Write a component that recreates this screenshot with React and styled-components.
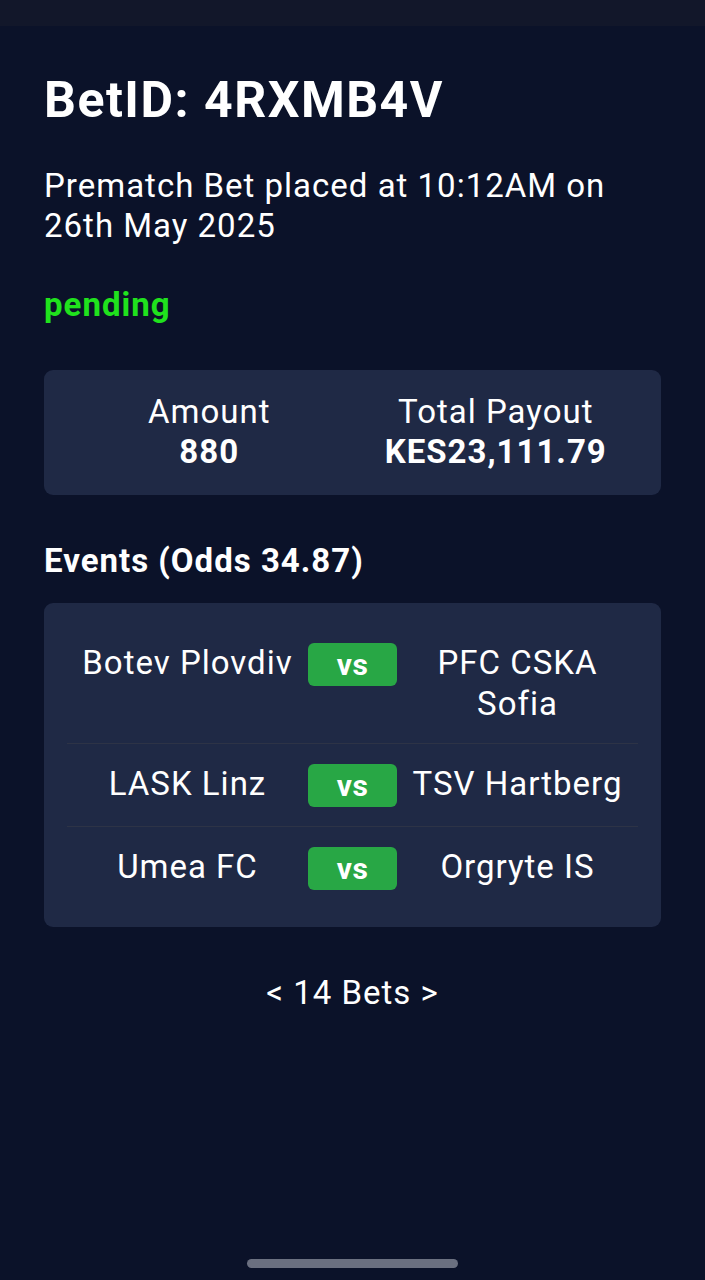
import React from "react";
import styled, { createGlobalStyle } from "styled-components";

const Global = createGlobalStyle`
  html, body { margin: 0; padding: 0; background: #0b1229; }
  body { font-family: Roboto, "Noto Sans", "Liberation Sans", sans-serif; color: #ffffff; }
  * { box-sizing: border-box; }
`;

const Screen = styled.div`
  position: relative;
  width: 705px;
  min-height: 1280px;
  background: #0b1229;
  display: flex;
  flex-direction: column;
`;

const StatusBar = styled.div`
  height: 26px;
  background: #12172a;
`;

const Content = styled.main`
  padding: 46px 44px 0;
  display: flex;
  flex-direction: column;
`;

const Title = styled.h1`
  margin: 0;
  font-size: 50px;
  line-height: 56px;
  font-weight: 700;
  letter-spacing: 1.5px;
`;

const BodyText = styled.div`
  font-size: 33px;
  line-height: 40px;
  letter-spacing: 1px;
`;

const Subtitle = styled(BodyText)`
  margin-top: 38px;
  font-weight: 400;
`;

const Status = styled(BodyText)`
  margin-top: 39px;
  font-weight: 700;
  color: #20e21d;
`;

const Card = styled.section`
  background: #1f2945;
  border-radius: 9px;
`;

const SummaryCard = styled(Card)`
  margin-top: 45px;
  display: grid;
  grid-template-columns: 1fr 1fr;
  padding: 22px 22px 23px;
`;

const Stat = styled(BodyText)`
  text-align: center;
`;

const StatValue = styled.div`
  font-weight: 700;
`;

const SectionTitle = styled(BodyText)`
  margin-top: 46px;
  font-weight: 700;
`;

const EventsCard = styled(Card)`
  margin-top: 22px;
  padding: 20px 23px 18px;
`;

const EventRow = styled.div`
  display: grid;
  grid-template-columns: 1fr 89px 1fr;
  align-items: start;
  padding: 19px 0;
  border-bottom: ${(p) => (p.$last ? "none" : "1px solid #2d3346")};
`;

const Team = styled(BodyText)`
  text-align: center;
  line-height: 41px;
  padding: 0 8px;
`;

const VsBadge = styled.div`
  height: 43px;
  margin-top: 1px;
  background: #28a745;
  border-radius: 6px;
  display: flex;
  align-items: center;
  justify-content: center;
  font-size: 30px;
  font-weight: 700;
  letter-spacing: 0.5px;
`;

const Pager = styled(BodyText)`
  margin-top: 46px;
  text-align: center;
`;

const HomeIndicator = styled.div`
  position: absolute;
  left: 247px;
  top: 1259px;
  width: 211px;
  height: 9px;
  border-radius: 5px;
  background: #6b7080;
`;

const events = [
  { home: "Botev Plovdiv", away: "PFC CSKA Sofia" },
  { home: "LASK Linz", away: "TSV Hartberg" },
  { home: "Umea FC", away: "Orgryte IS" },
];

export default function App() {
  return (
    <Screen>
      <Global />
      <StatusBar />
      <Content>
        <Title>BetID: 4RXMB4V</Title>
        <Subtitle>Prematch Bet placed at 10:12AM on 26th May 2025</Subtitle>
        <Status>pending</Status>
        <SummaryCard>
          <Stat>
            Amount
            <StatValue>880</StatValue>
          </Stat>
          <Stat>
            Total Payout
            <StatValue>KES23,111.79</StatValue>
          </Stat>
        </SummaryCard>
        <SectionTitle>Events (Odds 34.87)</SectionTitle>
        <EventsCard>
          {events.map((e, i) => (
            <EventRow key={i} $last={i === events.length - 1}>
              <Team>{e.home}</Team>
              <VsBadge>vs</VsBadge>
              <Team>{e.away}</Team>
            </EventRow>
          ))}
        </EventsCard>
        <Pager>&lt; 14 Bets &gt;</Pager>
      </Content>
      <HomeIndicator />
    </Screen>
  );
}
